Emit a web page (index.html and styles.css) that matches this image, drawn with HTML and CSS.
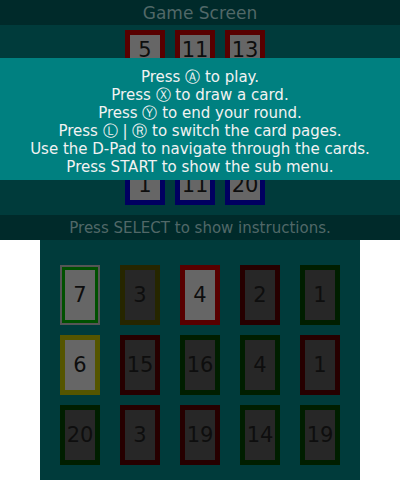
FILE: index.html
```html
<!DOCTYPE html>
<html>
<head>
<meta charset="utf-8">
<link rel="stylesheet" href="styles.css">
</head>
<body>
<div class="top">
  <div class="bar bar-title">Game Screen</div>
  <div class="table">
    <div class="hand hand-opponent">
      <div class="card red lit">5</div>
      <div class="card red lit">11</div>
      <div class="card red lit">13</div>
    </div>
    <div class="hand hand-player">
      <div class="card blue lit">1</div>
      <div class="card blue lit">11</div>
      <div class="card blue lit">20</div>
    </div>
  </div>
  <div class="bar bar-hint">Press SELECT to show instructions.</div>
  <div class="overlay">
    <p>Press Ⓐ to play.</p>
    <p>Press Ⓧ to draw a card.</p>
    <p>Press Ⓨ to end your round.</p>
    <p>Press Ⓛ | Ⓡ to switch the card pages.</p>
    <p>Use the D-Pad to navigate through the cards.</p>
    <p>Press START to show the sub menu.</p>
  </div>
</div>
<div class="bottom">
  <div class="grid">
    <div class="card green lit selected">7</div>
    <div class="card yellow">3</div>
    <div class="card red lit">4</div>
    <div class="card red">2</div>
    <div class="card green">1</div>
    <div class="card yellow lit">6</div>
    <div class="card red">15</div>
    <div class="card green">16</div>
    <div class="card green">4</div>
    <div class="card red">1</div>
    <div class="card green">20</div>
    <div class="card red">3</div>
    <div class="card red">19</div>
    <div class="card green">14</div>
    <div class="card green">19</div>
  </div>
</div>
</body>
</html>
```
FILE: styles.css
```css
* { box-sizing: border-box; }
html, body { margin: 0; padding: 0; background: #ffffff; }
body { font-family: "DejaVu Sans", sans-serif; }

.top {
  position: relative;
  width: 400px;
  height: 240px;
  background: #003b3b;
  display: flex;
  flex-direction: column;
}
.bar {
  height: 25px;
  background: #002a2a;
  color: #516868;
  display: flex;
  align-items: center;
  justify-content: center;
}
.bar-title { font-size: 17px; }
.bar-hint { font-size: 15px; padding-top: 1px; }

.table {
  flex: 1;
  display: flex;
  flex-direction: column;
  justify-content: space-between;
  padding: 5px 0 10px;
}
.hand {
  display: flex;
  justify-content: center;
  gap: 10px;
  padding-right: 10px;
}
.hand-opponent .card { padding-bottom: 20px; }
.hand-player .card { padding-top: 20px; }

.card {
  width: 40px;
  height: 60px;
  border: 5px solid #000;
  background: #272727;
  color: #0e0e0e;
  font-size: 21px;
  display: flex;
  align-items: center;
  justify-content: center;
}
.card.lit { background: #666666; }
.card.red { border-color: #260000; }
.card.red.lit { border-color: #580000; }
.card.green { border-color: #001e00; }
.card.green.lit { border-color: #005000; }
.card.yellow { border-color: #262600; }
.card.yellow.lit { border-color: #555500; }
.card.blue.lit { border-color: #000060; }
.card.selected {
  border-width: 3px;
  box-shadow: 0 0 0 2px #555555;
  width: 36px;
  height: 56px;
  margin: 2px;
}

.overlay {
  position: absolute;
  left: 0;
  top: 58px;
  width: 400px;
  height: 122px;
  background: #008080;
  color: #f2f2f2;
  font-size: 15px;
  padding-top: 5px;
  display: flex;
  flex-direction: column;
  justify-content: center;
  align-items: center;
}
.overlay p {
  margin: 0;
  line-height: 18px;
}

.bottom {
  width: 320px;
  height: 240px;
  margin: 0 auto;
  background: #003b3b;
  padding: 25px 20px 15px;
}
.grid {
  display: grid;
  grid-template-columns: repeat(5, 40px);
  grid-auto-rows: 60px;
  column-gap: 20px;
  row-gap: 10px;
}
```
